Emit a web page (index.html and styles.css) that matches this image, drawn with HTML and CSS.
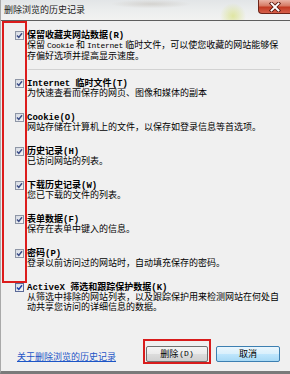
FILE: index.html
```html
<!DOCTYPE html>
<html lang="zh-CN">
<head>
<meta charset="utf-8">
<title>删除浏览的历史记录</title>
<link rel="stylesheet" href="styles.css">
</head>
<body>
<div class="window">
  <div class="titlebar">
    <span class="title">删除浏览的历史记录</span>
    <div class="close">
      <svg width="14" height="10" viewBox="0 0 14 10">
        <path d="M3.5 1.5 L10.5 8.5 M10.5 1.5 L3.5 8.5" stroke="#5a1a10" stroke-width="3.6" stroke-linecap="square" fill="none"/>
        <path d="M3.5 1.5 L10.5 8.5 M10.5 1.5 L3.5 8.5" stroke="#ffffff" stroke-width="1.9" stroke-linecap="square" fill="none"/>
      </svg>
    </div>
  </div>
  <div class="content">
    <div class="mark"></div>

    <div class="item">
      <span class="cb"><svg viewBox="0 0 7 7"><path d="M1 3.4 L2.8 5.4 L6 1.2"/></svg></span>
      <div class="text">
        <div class="name">保留收藏夹网站数据<span class="lat">(R)</span></div>
        <div class="desc">保留 <span class="mono">Cookie</span> 和 <span class="mono">Internet</span> 临时文件，可以使您收藏的网站能够保<br>存偏好选项并提高显示速度。</div>
      </div>
    </div>

    <div class="sep"></div>

    <div class="item">
      <span class="cb"><svg viewBox="0 0 7 7"><path d="M1 3.4 L2.8 5.4 L6 1.2"/></svg></span>
      <div class="text">
        <div class="name"><span class="lat">Internet </span>临时文件<span class="lat">(T)</span></div>
        <div class="desc">为快速查看而保存的网页、图像和媒体的副本</div>
      </div>
    </div>

    <div class="item">
      <span class="cb"><svg viewBox="0 0 7 7"><path d="M1 3.4 L2.8 5.4 L6 1.2"/></svg></span>
      <div class="text">
        <div class="name"><span class="lat">Cookie(O)</span></div>
        <div class="desc">网站存储在计算机上的文件，以保存如登录信息等首选项。</div>
      </div>
    </div>

    <div class="item">
      <span class="cb"><svg viewBox="0 0 7 7"><path d="M1 3.4 L2.8 5.4 L6 1.2"/></svg></span>
      <div class="text">
        <div class="name">历史记录<span class="lat">(H)</span></div>
        <div class="desc">已访问网站的列表。</div>
      </div>
    </div>

    <div class="item">
      <span class="cb"><svg viewBox="0 0 7 7"><path d="M1 3.4 L2.8 5.4 L6 1.2"/></svg></span>
      <div class="text">
        <div class="name">下载历史记录<span class="lat">(W)</span></div>
        <div class="desc">您已下载的文件的列表。</div>
      </div>
    </div>

    <div class="item">
      <span class="cb"><svg viewBox="0 0 7 7"><path d="M1 3.4 L2.8 5.4 L6 1.2"/></svg></span>
      <div class="text">
        <div class="name">表单数据<span class="lat">(F)</span></div>
        <div class="desc">保存在表单中键入的信息。</div>
      </div>
    </div>

    <div class="item">
      <span class="cb"><svg viewBox="0 0 7 7"><path d="M1 3.4 L2.8 5.4 L6 1.2"/></svg></span>
      <div class="text">
        <div class="name">密码<span class="lat">(P)</span></div>
        <div class="desc">登录以前访问过的网站时，自动填充保存的密码。</div>
      </div>
    </div>

    <div class="item">
      <span class="cb focus"><svg viewBox="0 0 7 7"><path d="M1 3.4 L2.8 5.4 L6 1.2"/></svg></span>
      <div class="text">
        <div class="name"><span class="lat">ActiveX </span>筛选和跟踪保护数据<span class="lat">(K)</span></div>
        <div class="desc">从筛选中排除的网站列表，以及跟踪保护用来检测网站在何处自<br>动共享您访问的详细信息的数据。</div>
      </div>
    </div>

    <div class="footer">
      <a class="link" href="#">关于删除浏览的历史记录</a>
      <div class="buttons">
        <div class="btn-wrap"><span class="btn">删除<span class="acc">(D)</span></span></div>
        <span class="btn default">取消</span>
      </div>
    </div>
  </div>
</div>
</body>
</html>
```

FILE: styles.css
```css
html, body {
  margin: 0;
  padding: 0;
}

body {
  width: 290px;
  height: 374px;
  overflow: hidden;
  font-family: "Noto Sans CJK SC", "Noto Sans", sans-serif;
  font-size: 9px;
  color: #000;
  background: #f0f0f0;
}

.window {
  height: 374px;
  box-sizing: border-box;
  display: flex;
  flex-direction: column;
  background: #f0f0f0;
  border-left: 1px solid #a9a9a9;
  border-bottom: 3px solid #7a7a7a;
}

.titlebar {
  height: 20px;
  flex: none;
  display: flex;
  align-items: flex-start;
  border-bottom: 1px solid #5e5e5e;
  background:
    radial-gradient(circle at 232px 16px, rgba(214, 224, 120, 0.65), rgba(214, 224, 120, 0) 13px),
    radial-gradient(ellipse at 150px 4px, rgba(200, 196, 190, 0.6), rgba(200, 196, 190, 0) 40px),
    linear-gradient(to bottom, #e2e5e7, #eceeee 55%, #f2f2f1);
}

.title {
  font-size: 9px;
  line-height: 20px;
  padding-left: 3px;
  color: #1a1a1a;
}

.close {
  margin-left: auto;
  width: 32px;
  height: 14px;
  box-sizing: border-box;
  border: 1px solid #6d2418;
  border-top: none;
  border-right: none;
  border-bottom-left-radius: 4px;
  background: linear-gradient(to bottom, #eab4a6 0%, #d67a64 45%, #c23a22 55%, #d6604a 100%);
  display: flex;
  align-items: center;
  justify-content: center;
}

.content {
  flex: 1;
  position: relative;
  display: flex;
  flex-direction: column;
  padding: 9px 10px 0 14px;
}

.mark {
  position: absolute;
  left: 1px;
  top: 0;
  width: 25px;
  height: 262px;
  box-sizing: border-box;
  border: 2px solid #dc1c1c;
}

.item {
  display: flex;
  gap: 3px;
}

.item + .item {
  margin-top: 14px;
}

.cb {
  flex: none;
  width: 9px;
  height: 9px;
  box-sizing: border-box;
  margin-top: 1px;
  border: 1px solid #8e96a6;
  background: linear-gradient(135deg, #d4d9e2, #f6f7f9);
  display: flex;
  align-items: center;
  justify-content: center;
}

.cb svg {
  width: 7px;
  height: 7px;
}

.cb path {
  fill: none;
  stroke: #3b4d86;
  stroke-width: 1.5;
}

.cb.focus {
  border-color: #5a6a98;
}

.cb.focus path {
  stroke: #1d3fa8;
}

.text {
  min-width: 0;
}

.name {
  font-weight: bold;
  line-height: 10px;
  height: 10px;
  white-space: nowrap;
}

.lat {
  font-family: "Liberation Mono", monospace;
  font-weight: bold;
  font-size: 9px;
}

.desc {
  line-height: 10px;
  white-space: nowrap;
}

.mono {
  font-family: "Liberation Mono", monospace;
  font-size: 8px;
  letter-spacing: -0.3px;
}

.sep {
  height: 1px;
  background: #d2d2d2;
  margin: 8px 0 8px 13px;
}

.footer {
  margin-top: auto;
  display: flex;
  align-items: center;
  padding: 0 0 9px 2px;
}

.link {
  color: #1c55c6;
  text-decoration: underline;
  line-height: 10px;
  padding-top: 5px;
}

.buttons {
  margin-left: auto;
  display: flex;
  gap: 8px;
}

.btn-wrap {
  position: relative;
}

.btn-wrap::after {
  content: "";
  position: absolute;
  left: -3px;
  right: -3px;
  top: -7px;
  bottom: -2px;
  border: 2px solid #d81c1c;
}

.btn {
  display: flex;
  align-items: center;
  justify-content: center;
  width: 62px;
  height: 16px;
  box-sizing: border-box;
  border: 1px solid #707070;
  border-radius: 2px;
  background: linear-gradient(to bottom, #f4f4f4 0%, #ebebeb 48%, #dcdcdc 52%, #d0d0d0 100%);
  font-size: 9px;
  line-height: 14px;
}

.btn .acc {
  font-family: "Liberation Mono", monospace;
  font-size: 8px;
  margin-left: 1px;
}

.btn.default {
  width: 64px;
  border-color: #3c7fb1;
  background: linear-gradient(to bottom, #eaf6fd 0%, #d9f0fc 48%, #bee6fd 52%, #a7d9f5 100%);
}
```
